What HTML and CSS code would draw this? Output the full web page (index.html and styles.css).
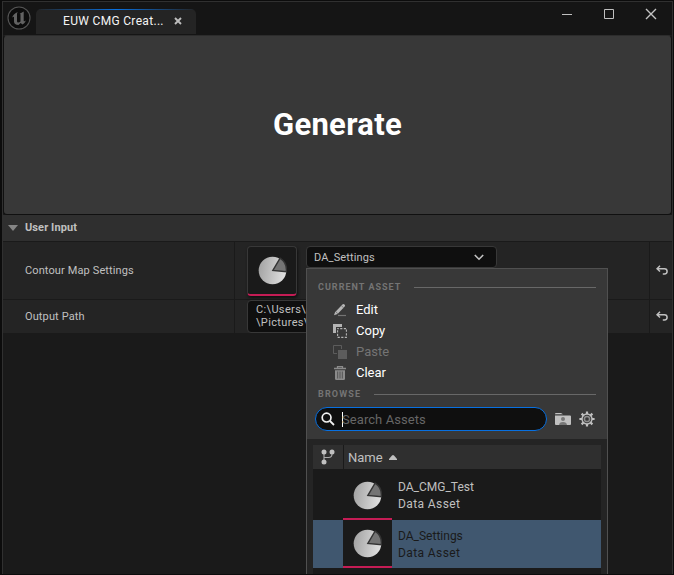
FILE: index.html
```html
<!DOCTYPE html>
<html lang="en">
<head>
<meta charset="utf-8">
<title>EUW CMG Creator</title>
<link rel="stylesheet" href="styles.css">
</head>
<body>
<svg class="defs" width="0" height="0">
  <defs>
    <linearGradient id="pieFill" x1="0" y1="0" x2="1" y2="0.15"><stop offset="0" stop-color="#a0a0a0"/><stop offset="1" stop-color="#dedede"/></linearGradient>
    <symbol id="pie" viewBox="0 0 30 30">
      <circle cx="15" cy="15" r="14.3" fill="url(#pieFill)"/>
      <path d="M15.4 14.9 L22.8 2.3 A14.5 14.5 0 0 1 29.3 16.2 Z" fill="#747474" stroke="#343434" stroke-width="1.5"/>
    </symbol>
    <symbol id="undo" viewBox="0 0 12 10">
      <path d="M4 .7 L1 3.7 L4 6.5 M1.2 3.7 H8.5 A2.6 2.6 0 0 1 8.5 8.9 H6.8" fill="none" stroke="#c0c0c0" stroke-width="1.5"/>
    </symbol>
  </defs>
</svg>
<div class="window">
  <header class="titlebar">
    <svg class="logo" viewBox="0 0 24 24">
      <circle cx="12" cy="12" r="11" fill="#0c0c0c" stroke="#555" stroke-width="1.1"/>
      <path d="M5 11.8 Q6.5 7.5 10.8 6 Q10 6.9 10 8 V15.3 Q10 16.6 11.3 16.6 Q12.6 16.6 13.5 15.5 V8.6 Q13.5 7.8 12.6 7.8 Q14.5 6.8 16.7 5.6 V14.7 Q16.8 15.8 19 14.6 Q17.7 17.5 15.6 18.5 L13.6 17 L11.5 19 Q7 18.8 7 15.5 V11 Q6.5 10 5 11.8Z" fill="#626262"/>
    </svg>
    <div class="tab"><span class="tab-label">EUW CMG Creat...</span>
      <svg class="tab-close" viewBox="0 0 8 8"><path d="M1 1 7 7M7 1 1 7" stroke="#bdbdbd" stroke-width="1.9"/></svg>
    </div>
    <div class="controls">
      <svg width="10" height="12" viewBox="0 0 10 12"><path d="M0 6.5H10" stroke="#c0c0c0"/></svg>
      <svg width="10" height="10" viewBox="0 0 10 10"><path d="M.5 .5H9.5V9.5H.5Z" fill="none" stroke="#c0c0c0"/></svg>
      <svg class="close" width="12" height="12" viewBox="0 0 12 12"><path d="M1 1 11 11M11 1 1 11" stroke="#c4c4c4" stroke-width="1.4"/></svg>
    </div>
  </header>
  <button class="generate">Generate</button>
  <section class="details">
    <div class="section-head"><svg width="10" height="6" viewBox="0 0 10 6"><path d="M0 0H10L5 6Z" fill="#858585"/></svg><span>User Input</span></div>
    <div class="row row-asset">
      <div class="label">Contour Map Settings</div>
      <div class="value">
        <div class="thumb"><svg width="29" height="29"><use href="#pie"/></svg></div>
        <div class="picker">
          <div class="combo"><span>DA_Settings</span><svg width="10" height="7" viewBox="0 0 10 7"><path d="M.8 1 5 5.2 9.2 1" fill="none" stroke="#c4c4c4" stroke-width="1.6"/></svg></div>
          <div class="menu">
            <div class="menu-top">
              <div class="group group-current"><span>CURRENT ASSET</span><i></i></div>
              <ul class="actions">
                <li><svg viewBox="0 0 14 14"><path d="M2 9.3 9.4 1.4 Q10.5 .5 11.5 1.5 Q12.6 2.5 11.7 3.6 L4.6 11 1 12.2Z" fill="#b6b6b6"/><path d="M8.2 2.5 10.8 5M2.6 8.5 5.2 11" stroke="#686868" stroke-width=".8"/><path d="M5 12.5H13" stroke="#747474" stroke-width="1.2"/></svg><span>Edit</span></li>
                <li><svg viewBox="0 0 14 14"><path d="M0 0H9V3H3V9H0Z" fill="#b4b4b4"/><path d="M4.6 4.6H13.4V13.4H4.6Z" fill="none" stroke="#b4b4b4" stroke-width="1.1" stroke-dasharray="2.2 1.4" stroke-dashoffset="1"/></svg><span>Copy</span></li>
                <li class="disabled"><svg viewBox="0 0 14 14"><path d="M4 8.5H.5V.5H8.5V4" fill="none" stroke="#5c5c5c"/><path d="M5 5H14V14H5Z" fill="#5c5c5c"/></svg><span>Paste</span></li>
                <li><svg viewBox="0 0 14 14"><path d="M1 2.5H13M4.5 2V.7H9.5V2" fill="none" stroke="#8b8b8b" stroke-width="1.3"/><path d="M2 4.3H12V12.5Q12 14 10.8 14H3.2Q2 14 2 12.5Z" fill="#8b8b8b"/><path d="M4.7 5.5V12.5M7 5.5V12.5M9.3 5.5V12.5" stroke="#4c4c4c" stroke-width=".9"/></svg><span>Clear</span></li>
              </ul>
              <div class="group group-browse"><span>BROWSE</span><i></i></div>
              <div class="search-line">
                <div class="search"><svg width="14" height="14" viewBox="0 0 14 14"><circle cx="5.6" cy="5.6" r="4.4" fill="none" stroke="#f2f2f2" stroke-width="1.7"/><path d="M9 9 13 13" stroke="#f2f2f2" stroke-width="1.8"/></svg><b></b><span>Search Assets</span></div>
                <svg class="folder" width="16" height="12" viewBox="0 0 16 12"><path d="M0 1Q0 0 1 0H6L8 1.2H0ZM0 2.5H15Q16 2.5 16 3.5V11Q16 12 15 12H1Q0 12 0 11Z" fill="#c0c0c0"/><circle cx="8" cy="5.9" r="2" fill="#777"/><path d="M4 12Q4.3 9 8 9T12 12Z" fill="#777"/></svg>
                <svg class="gear" width="16" height="16" viewBox="0 0 16 16"><circle cx="8" cy="8" r="5" fill="none" stroke="#c0c0c0" stroke-width="1.4"/><circle cx="8" cy="8" r="2.6" fill="none" stroke="#8d8d8d" stroke-width="1.5"/><path d="M8 .4V3M8 13V15.6M.4 8H3M13 8H15.6M2.6 2.6 4.5 4.5M11.5 11.5 13.4 13.4M13.4 2.6 11.5 4.5M4.5 11.5 2.6 13.4" stroke="#c0c0c0" stroke-width="2.2"/></svg>
              </div>
            </div>
            <div class="browser">
              <div class="thead">
                <div class="source"><svg width="14" height="16" viewBox="0 0 14 16"><path d="M3 3V13M11 3V5Q11 8.5 7.5 8.5H3" fill="none" stroke="#aaa" stroke-width="1.1"/><circle cx="3" cy="3" r="2.5" fill="#c0c0c0"/><circle cx="11" cy="3" r="2.5" fill="#c0c0c0"/><circle cx="3" cy="13" r="2.5" fill="#c0c0c0"/></svg></div>
                <div class="name-col"><span>Name</span><svg width="8" height="5" viewBox="0 0 8 5"><path d="M0 5V4L3 .5Q4 -.3 5 .5L8 4V5Z" fill="#c0c0c0"/></svg></div>
              </div>
              <div class="asset">
                <div class="asset-thumb"><svg width="29" height="29"><use href="#pie"/></svg></div>
                <div class="asset-text"><div class="asset-name">DA_CMG_Test</div><div class="asset-type">Data Asset</div></div>
              </div>
              <div class="asset selected">
                <div class="asset-thumb"><svg width="29" height="29"><use href="#pie"/></svg></div>
                <div class="asset-text"><div class="asset-name">DA_Settings</div><div class="asset-type">Data Asset</div></div>
              </div>
              <div class="rest"></div>
            </div>
          </div>
        </div>
      </div>
      <div class="reset"><svg width="12" height="10"><use href="#undo"/></svg></div>
    </div>
    <div class="row row-path">
      <div class="label">Output Path</div>
      <div class="value"><div class="path">C:\Users\<br>\Pictures\</div></div>
      <div class="reset"><svg width="12" height="10"><use href="#undo"/></svg></div>
    </div>
  </section>
</div>
</body>
</html>
```
FILE: styles.css
```css
* { box-sizing: border-box; }
body { margin: 0; width: 674px; height: 575px; overflow: hidden; background: #0c0c0c; padding: 1px 1px 1px 2px; font: 12px Roboto, sans-serif; color: #c0c0c0; }
svg { display: block; flex: none; }
.defs { position: absolute; }
.window { height: 573px; border: 1px solid #303030; border-bottom: 0; background: #1a1a1a; }
.titlebar { display: flex; height: 33px; background: #151515; padding-left: 4px; }
.logo { width: 24px; height: 24px; margin-top: 4px; }
.tab { display: flex; align-items: center; width: 160px; height: 25px; margin: 7px 0 0 5px; padding: 0 0 2px 27px; border-radius: 5px 5px 0 0; background: linear-gradient(90deg, #242424, #0870e0 50%, #242424) top / 100% 1px no-repeat #242424; color: #f4f4f4; }
.tab-label { width: 101px; white-space: nowrap; font-size: 12px; letter-spacing: .32px; }
.tab-close { width: 8px; height: 8px; margin-left: 10px; }
.controls { display: flex; align-items: center; gap: 32px; height: 24px; margin-left: auto; padding-right: 15px; }
.controls .close { margin-left: -1px; }
.generate { display: block; width: 669px; height: 180px; margin: 0; padding: 0 0 1px; border: 1px solid #101010; border-top-color: #2c2c2c; border-radius: 4px; background: #383838; color: #fff; font: bold 31px Roboto, sans-serif; letter-spacing: .3px; }
.section-head { display: flex; align-items: center; height: 26px; padding: 0 0 2px 5px; gap: 7px; background: #2f2f2f; font-size: 11px; font-weight: bold; letter-spacing: .1px; }
.section-head svg { margin-top: 2px; }
.row { display: grid; grid-template-columns: 231px 1fr 23px; border-top: 1px solid #1a1a1a; background: #242424; }
.row-asset { height: 58px; }
.row-path { height: 34px; }
.label { display: flex; align-items: center; padding-left: 22px; font-size: 11px; letter-spacing: .12px; }
.value, .reset { border-left: 1px solid #1a1a1a; }
.value { display: flex; padding-left: 12px; }
.reset { display: flex; align-items: center; justify-content: center; padding: 0 0 2px 2px; }
.thumb { width: 50px; height: 50px; margin-top: 4px; padding: 9px 0 0 10px; border: 1px solid #383838; border-bottom: 2px solid #c51c55; border-radius: 4px; background: #1a1a1a; box-shadow: 1px 2px 3px #111; }
.picker { position: relative; margin: 4px 0 0 9px; height: 22px; }
.combo { display: flex; align-items: center; justify-content: space-between; width: 191px; height: 22px; padding: 0 12px 0 7px; border: 1px solid #383838; border-radius: 4px; background: #0f0f0f; font-size: 11px; letter-spacing: .13px; }
.path { width: 300px; height: 33px; padding: 2px 8px; border: 1px solid #383838; border-radius: 4px; background: #0f0f0f; font-size: 11px; line-height: 13px; letter-spacing: .35px; }
.menu { position: absolute; z-index: 2; left: 0; top: 22px; width: 302px; height: 306px; overflow: hidden; border: 1px solid #505050; border-bottom: 0; background: #242424; }
.menu-top { height: 170px; padding: 12px 11px 0 8px; background: #383838; }
.group { display: flex; align-items: center; height: 12px; padding-left: 3px; color: #747474; font-size: 9px; font-weight: bold; letter-spacing: 1.02px; }
.group i { flex: 1; height: 1px; margin-left: 13px; background: #686868; }
.actions { margin: 6px 0 5px; padding: 0 0 0 18px; list-style: none; }
.actions li { display: flex; align-items: center; gap: 9px; height: 21px; color: #fff; font-size: 13px; }
.actions svg { width: 14px; height: 14px; }
.actions .disabled { color: #747474; }
.group-browse { letter-spacing: 1.15px; }
.search-line { display: flex; align-items: center; width: 281px; margin-top: 7px; }
.search { display: flex; align-items: center; width: 232px; height: 24px; padding-left: 5px; border: 1px solid #0870e0; border-radius: 12px; background: #0f0f0f; color: #666; font-size: 13px; letter-spacing: .07px; }
.search b { width: 1px; height: 15px; margin: 0 -1px 0 7px; background: #fff; }
.folder { margin-left: 8px; }
.gear { margin-left: 8px; }
.browser { display: flex; flex-direction: column; height: 136px; padding: 6px 6px 0; }
.thead { display: flex; height: 24px; background: #2f2f2f; font-size: 13px; }
.source { width: 31px; padding: 4px 0 0 8px; border-right: 1px solid #1a1a1a; }
.name-col { display: flex; align-items: center; padding-left: 4px; gap: 6px; }
.asset { display: flex; flex: none; height: 51px; padding-left: 30px; background: #1a1a1a; }
.asset-thumb { width: 49px; height: 51px; padding: 12px 0 0 10px; border-bottom: 2px solid #c51c55; background: #1a1a1a; }
.asset-text { padding: 10px 0 0 6px; font-size: 12px; line-height: 17px; }
.asset-type { letter-spacing: .4px; }
.selected { height: 48px; background: #40576f; color: #1a1a1a; }
.selected .asset-thumb { height: 48px; padding-top: 9px; }
.selected .asset-text { padding-top: 8px; }
.rest { flex: 1; background: #1a1a1a; }
```
